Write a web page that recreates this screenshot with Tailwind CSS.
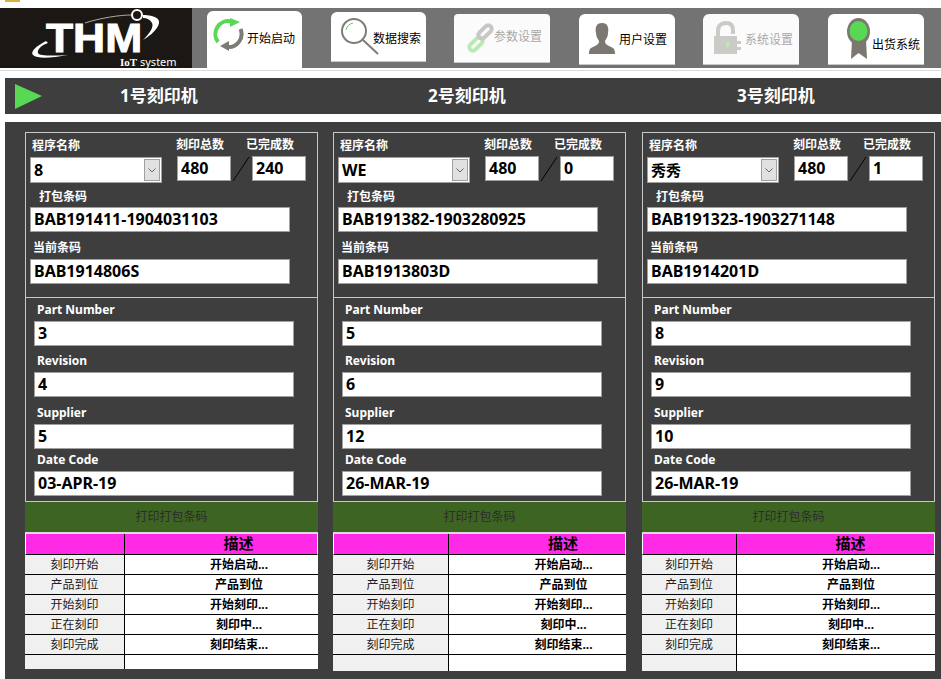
<!DOCTYPE html>
<html lang="zh">
<head>
<meta charset="UTF-8">
<title>THM IoT system</title>
<script src="https://cdn.jsdelivr.net/npm/@tailwindcss/browser@4"></script>
</head>
<body class="bg-white w-[941px] h-[679px] overflow-hidden font-['Noto_Sans','Noto_Sans_CJK_SC',sans-serif]">

<div class="h-2 pl-[5px]"><div class="w-[15px] h-[2px] bg-[#d8b040]"></div></div>

<!-- top nav -->
<div class="h-[60px] flex bg-[#737373]">
  <div class="w-[192px] h-[60px] bg-[#1a1714] relative overflow-hidden shrink-0">
    <svg class="absolute left-0 top-0" width="192" height="60" viewBox="0 0 192 60">
      <path d="M46 33C36 38 30 44 33 47C37 51 52 50 68 47C52 48 39 48 38 45C37 42 41 37 48 35Z" fill="#fff"/>
      <path d="M85 15C100 10 120 7 131 7" fill="none" stroke="#b5aa98" stroke-width="1"/>
      <path d="M143 7C155 7 162 11 158 18C155 24 148 29 143 32C150 25 154 19 152 15C150 11 146 10 143 10Z" fill="#fff"/>
      <circle cx="137" cy="7" r="5" fill="#1a1714" stroke="#fff" stroke-width="2"/>
    </svg>
    <span class="absolute left-[46px] top-[14px] font-['Liberation_Sans'] font-bold text-white text-[40px] leading-[32px] scale-x-[1.11] origin-left [-webkit-text-stroke:1px_white]">THM</span>
    <span class="absolute left-[120px] top-[47px] text-white text-[11px] leading-[13px] whitespace-nowrap"><span class="font-['Liberation_Serif'] font-bold">IoT</span> system</span>
  </div>
  <div class="pl-[15px] flex items-start">
    <div class="w-[95px] h-[57px] mt-[3px] bg-white rounded-t-md relative text-xs text-black">
      <svg class="absolute left-[6px] top-[7px]" width="32" height="36" viewBox="0 0 32 36" fill="none" stroke-width="4">
        <path d="M5 24A13 13 0 0 1 18 3.4" stroke="#59d854"/><path d="M17 0L27 4L17 9Z" fill="#59d854"/>
        <path d="M27.5 11A13 13 0 0 1 14 29" stroke="#7d7d78"/><path d="M16 23L7 28L16 33Z" fill="#7d7d78"/>
      </svg>
      <span class="absolute left-[40px] top-[20px] leading-[16px]">开始启动</span>
    </div>
    <div class="w-[95px] h-[50px] mt-1 ml-[29px] bg-white rounded-t-md border-b border-[#c8c8c8] relative text-xs text-black">
      <svg class="absolute left-[9px] top-[5px]" width="40" height="40" viewBox="0 0 40 40" fill="none">
        <circle cx="14" cy="14" r="12" stroke="#7d7d78" stroke-width="2"/><path d="M23 23L38 37" stroke="#7d7d78" stroke-width="2"/><path d="M6 13C7 9 9 7 13 6" stroke="#59d854"/>
      </svg>
      <span class="absolute left-[42px] top-[19px] leading-[16px]">数据搜索</span>
    </div>
    <div class="w-[96px] h-[49px] mt-[6px] ml-[28px] bg-[#fbfbfb] rounded-t-sm border-b border-[#c8c8c8] relative text-xs text-[#a8a8a8]">
      <svg class="absolute left-[11px] top-[7px]" width="32" height="36" viewBox="0 0 32 36" fill="none" stroke-width="4">
        <rect x="3" y="19.5" width="16" height="7" rx="3.5" transform="rotate(-45 11 23)" stroke="#b8eab6"/>
        <rect x="12" y="7.5" width="16" height="7" rx="3.5" transform="rotate(-45 20 11)" stroke="#c9c7c5"/>
      </svg>
      <span class="absolute left-[40px] top-[15px] leading-[16px]">参数设置</span>
    </div>
    <div class="w-[96px] h-[51px] mt-[6px] ml-[29px] bg-white rounded-t-md border-b border-[#c8c8c8] relative text-xs text-black">
      <svg class="absolute left-[9px] top-[9px]" width="28" height="32" viewBox="0 0 28 32" fill="#7a7870">
        <path d="M14 0C8 0 7 5 8 10C8 14 10 16 11 18C11 21 9 22 5 24C2 25 1 27 1 31H27C27 27 26 25 23 24C19 22 17 21 17 18C18 16 20 14 20 10C21 5 20 0 14 0Z"/>
      </svg>
      <span class="absolute left-[40px] top-[18px] leading-[16px]">用户设置</span>
    </div>
    <div class="w-[96px] h-[51px] mt-[6px] ml-[28px] bg-[#fbfbfb] rounded-t-md border-b border-[#c8c8c8] relative text-xs text-[#a8a8a8]">
      <svg class="absolute left-[10px] top-[6px]" width="28" height="40" viewBox="0 0 28 40">
        <path d="M5 20V11C5 5 9 3 13 3C18 3 20 6 20 10V14" fill="none" stroke="#cbcac7" stroke-width="4"/>
        <path d="M2 16H24V21H28V24H24V27H28V30H24V34H2C1 34 1 34 1 33V17C1 16 1 16 2 16Z" fill="#cbcac7"/>
        <path d="M12 22H17L15 30Z" fill="#b8eab6"/>
      </svg>
      <span class="absolute left-[42px] top-[18px] leading-[16px]">系统设置</span>
    </div>
    <div class="w-[96px] h-[51px] mt-[6px] ml-[29px] bg-white rounded-t-md border-b border-[#c8c8c8] relative text-xs text-black">
      <svg class="absolute left-[19px] top-[4px]" width="24" height="42" viewBox="0 0 24 42">
        <path d="M5 22L4 41L11.5 35L20 41L19 22Z" fill="#7a7870"/>
        <ellipse cx="11.5" cy="13.5" rx="11.5" ry="13.5" fill="#7a7870"/>
        <ellipse cx="11.5" cy="13" rx="9" ry="10" fill="#59d854"/>
      </svg>
      <span class="absolute left-[44px] top-[23px] leading-[16px]">出货系统</span>
    </div>
  </div>
</div>

<div class="h-[2px]"></div>
<div class="h-px bg-[#dcdcdc]"></div>

<div class="ml-[5px] mt-[7px] h-9 bg-[#3e3e3e] flex items-center text-white font-bold text-[17px] relative">
  <svg class="absolute left-[10px] top-[6px]" width="28" height="25" viewBox="0 0 28 25"><path d="M0 0L27 12L0 25Z" fill="#59d854"/></svg>
  <span class="ml-[115px] w-[308px]">1号刻印机</span>
  <span class="w-[309px]">2号刻印机</span>
  <span>3号刻印机</span>
</div>

<!-- machines -->
<div class="ml-[5px] mt-2 h-[557px] bg-[#3e3e3e] pt-[10px] pl-5 flex gap-[15px]">

  <!-- col 1 -->
  <div class="w-[293px]">
    <div class="h-[165px] border border-[#c8c8c8] border-b-0 relative text-xs font-bold text-white">
      <div class="flex">
        <div class="pl-[6px] pt-[5px] w-[150px]">
          <div class="leading-[16px]">程序名称</div>
          <div class="mt-[3px] ml-[-2px] w-[132px] h-[26px] bg-white border border-[#a0a0a0] flex items-center justify-between pl-[3px] pr-px text-base text-black">8<span class="w-4 h-[22px] bg-[#e1e1e1] border border-[#a0a0a0] flex items-center justify-center"><svg width="8" height="5" viewBox="0 0 8 5" fill="none"><path d="M0.5 0.5L4 4L7.5 0.5" stroke="#666"/></svg></span></div>
        </div>
        <div class="pt-1 w-[76px]">
          <div class="leading-[16px]">刻印总数</div>
          <div class="mt-[3px] ml-px w-[54px] h-[25px] bg-white border border-[#a0a0a0] flex items-center pl-[3px] pb-[2px] text-base text-black">480</div>
        </div>
        <div class="pt-1">
          <div class="leading-[16px] -ml-[6px]">已完成数</div>
          <div class="mt-[3px] w-[54px] h-[25px] bg-white border border-[#a0a0a0] flex items-center pl-[3px] pb-[2px] text-base text-black">240</div>
        </div>
      </div>
      <div class="pl-[13px] mt-[6px] leading-[16px]">打包条码</div>
      <div class="ml-1 mt-[2px] w-[260px] h-[25px] bg-white border border-[#a0a0a0] flex items-center pl-[3px] pb-[2px] text-base text-black">BAB191411-1904031103</div>
      <div class="pl-[7px] mt-2 leading-[16px]">当前条码</div>
      <div class="ml-1 mt-[3px] w-[260px] h-[25px] bg-white border border-[#a0a0a0] flex items-center pl-[3px] pb-[2px] text-base text-black">BAB1914806S</div>
      <svg class="absolute left-[206px] top-[23px]" width="18" height="26" viewBox="0 0 18 26"><path d="M1 25L17 1" stroke="#000"/></svg>
    </div>
    <div class="h-[205px] border border-[#c8c8c8] text-xs font-bold text-white pl-2">
      <div class="ml-[3px] mt-1 leading-[16px]">Part Number</div>
      <div class="mt-[3px] w-[260px] h-[25px] bg-white border border-[#a0a0a0] flex items-center pl-[3px] pb-[2px] text-base text-black">3</div>
      <div class="ml-[3px] mt-[7px] leading-[16px]">Revision</div>
      <div class="mt-[3px] w-[260px] h-[25px] bg-white border border-[#a0a0a0] flex items-center pl-[3px] pb-[2px] text-base text-black">4</div>
      <div class="ml-[3px] mt-2 leading-[16px]">Supplier</div>
      <div class="mt-[3px] w-[260px] h-[25px] bg-white border border-[#a0a0a0] flex items-center pl-[3px] pb-[2px] text-base text-black">5</div>
      <div class="ml-[3px] mt-[3px] leading-[16px]">Date Code</div>
      <div class="mt-[3px] w-[260px] h-[25px] bg-white border border-[#a0a0a0] flex items-center pl-[3px] pb-[2px] text-base text-black">03-APR-19</div>
    </div>
    <div class="h-[30px] bg-[#3e6423] flex items-center justify-center text-xs text-[#2c2c2c]">打印打包条码</div>
    <div class="h-[137px] bg-white border-t-2 border-[#dcdcdc] text-xs">
      <div class="grid grid-cols-[99px_1fr] h-[21px] font-bold text-[15px] text-black bg-[#ff2ae6] border-x border-white border-b border-b-black"><div class="border-r border-black"></div><div class="text-center leading-[18px] pl-[35px]">描述</div></div>
      <div class="grid grid-cols-[100px_1fr] h-5 border-b border-black leading-[19px] text-center"><div class="bg-[#f0f0f0] border-r border-black text-[#222]">刻印开始</div><div class="font-bold pl-[35px]">开始启动...</div></div>
      <div class="grid grid-cols-[100px_1fr] h-5 border-b border-black leading-[19px] text-center"><div class="bg-[#f0f0f0] border-r border-black text-[#222]">产品到位</div><div class="font-bold pl-[35px]">产品到位</div></div>
      <div class="grid grid-cols-[100px_1fr] h-5 border-b border-black leading-[19px] text-center"><div class="bg-[#f0f0f0] border-r border-black text-[#222]">开始刻印</div><div class="font-bold pl-[35px]">开始刻印...</div></div>
      <div class="grid grid-cols-[100px_1fr] h-5 border-b border-black leading-[19px] text-center"><div class="bg-[#f0f0f0] border-r border-black text-[#222]">正在刻印</div><div class="font-bold pl-[35px]">刻印中...</div></div>
      <div class="grid grid-cols-[100px_1fr] h-5 border-b border-black leading-[19px] text-center"><div class="bg-[#f0f0f0] border-r border-black text-[#222]">刻印完成</div><div class="font-bold pl-[35px]">刻印结束...</div></div>
      <div class="grid grid-cols-[100px_1fr] h-[14px]"><div class="bg-[#f0f0f0] border-r border-black"></div><div></div></div>
    </div>
  </div>

  <!-- col 2 -->
  <div class="w-[293px]">
    <div class="h-[165px] border border-[#c8c8c8] border-b-0 relative text-xs font-bold text-white">
      <div class="flex">
        <div class="pl-[6px] pt-[5px] w-[150px]">
          <div class="leading-[16px]">程序名称</div>
          <div class="mt-[3px] ml-[-2px] w-[132px] h-[26px] bg-white border border-[#a0a0a0] flex items-center justify-between pl-[3px] pr-px text-base text-black">WE<span class="w-4 h-[22px] bg-[#e1e1e1] border border-[#a0a0a0] flex items-center justify-center"><svg width="8" height="5" viewBox="0 0 8 5" fill="none"><path d="M0.5 0.5L4 4L7.5 0.5" stroke="#666"/></svg></span></div>
        </div>
        <div class="pt-1 w-[76px]">
          <div class="leading-[16px]">刻印总数</div>
          <div class="mt-[3px] ml-px w-[54px] h-[25px] bg-white border border-[#a0a0a0] flex items-center pl-[3px] pb-[2px] text-base text-black">480</div>
        </div>
        <div class="pt-1">
          <div class="leading-[16px] -ml-[6px]">已完成数</div>
          <div class="mt-[3px] w-[54px] h-[25px] bg-white border border-[#a0a0a0] flex items-center pl-[3px] pb-[2px] text-base text-black">0</div>
        </div>
      </div>
      <div class="pl-[13px] mt-[6px] leading-[16px]">打包条码</div>
      <div class="ml-1 mt-[2px] w-[260px] h-[25px] bg-white border border-[#a0a0a0] flex items-center pl-[3px] pb-[2px] text-base text-black">BAB191382-1903280925</div>
      <div class="pl-[7px] mt-2 leading-[16px]">当前条码</div>
      <div class="ml-1 mt-[3px] w-[260px] h-[25px] bg-white border border-[#a0a0a0] flex items-center pl-[3px] pb-[2px] text-base text-black">BAB1913803D</div>
      <svg class="absolute left-[206px] top-[23px]" width="18" height="26" viewBox="0 0 18 26"><path d="M1 25L17 1" stroke="#000"/></svg>
    </div>
    <div class="h-[205px] border border-[#c8c8c8] text-xs font-bold text-white pl-2">
      <div class="ml-[3px] mt-1 leading-[16px]">Part Number</div>
      <div class="mt-[3px] w-[260px] h-[25px] bg-white border border-[#a0a0a0] flex items-center pl-[3px] pb-[2px] text-base text-black">5</div>
      <div class="ml-[3px] mt-[7px] leading-[16px]">Revision</div>
      <div class="mt-[3px] w-[260px] h-[25px] bg-white border border-[#a0a0a0] flex items-center pl-[3px] pb-[2px] text-base text-black">6</div>
      <div class="ml-[3px] mt-2 leading-[16px]">Supplier</div>
      <div class="mt-[3px] w-[260px] h-[25px] bg-white border border-[#a0a0a0] flex items-center pl-[3px] pb-[2px] text-base text-black">12</div>
      <div class="ml-[3px] mt-[3px] leading-[16px]">Date Code</div>
      <div class="mt-[3px] w-[260px] h-[25px] bg-white border border-[#a0a0a0] flex items-center pl-[3px] pb-[2px] text-base text-black">26-MAR-19</div>
    </div>
    <div class="h-[30px] bg-[#3e6423] flex items-center justify-center text-xs text-[#2c2c2c]">打印打包条码</div>
    <div class="h-[139px] bg-white border-t-2 border-[#dcdcdc] text-xs">
      <div class="grid grid-cols-[115px_1fr] h-[21px] font-bold text-[15px] text-black bg-[#ff2ae6] border-x border-white border-b border-b-black"><div class="border-r border-black"></div><div class="text-center leading-[18px] pl-[52px]">描述</div></div>
      <div class="grid grid-cols-[116px_1fr] h-5 border-b border-black leading-[19px] text-center"><div class="bg-[#f0f0f0] border-r border-black text-[#222]">刻印开始</div><div class="font-bold pl-[52px]">开始启动...</div></div>
      <div class="grid grid-cols-[116px_1fr] h-5 border-b border-black leading-[19px] text-center"><div class="bg-[#f0f0f0] border-r border-black text-[#222]">产品到位</div><div class="font-bold pl-[52px]">产品到位</div></div>
      <div class="grid grid-cols-[116px_1fr] h-5 border-b border-black leading-[19px] text-center"><div class="bg-[#f0f0f0] border-r border-black text-[#222]">开始刻印</div><div class="font-bold pl-[52px]">开始刻印...</div></div>
      <div class="grid grid-cols-[116px_1fr] h-5 border-b border-black leading-[19px] text-center"><div class="bg-[#f0f0f0] border-r border-black text-[#222]">正在刻印</div><div class="font-bold pl-[52px]">刻印中...</div></div>
      <div class="grid grid-cols-[116px_1fr] h-5 border-b border-black leading-[19px] text-center"><div class="bg-[#f0f0f0] border-r border-black text-[#222]">刻印完成</div><div class="font-bold pl-[52px]">刻印结束...</div></div>
      <div class="grid grid-cols-[116px_1fr] h-4"><div class="bg-[#f0f0f0] border-r border-black"></div><div></div></div>
    </div>
  </div>

  <!-- col 3 -->
  <div class="w-[293px] ml-px">
    <div class="h-[165px] border border-[#c8c8c8] border-b-0 relative text-xs font-bold text-white">
      <div class="flex">
        <div class="pl-[6px] pt-[5px] w-[150px]">
          <div class="leading-[16px]">程序名称</div>
          <div class="mt-[3px] ml-[-2px] w-[132px] h-[26px] bg-white border border-[#a0a0a0] flex items-center justify-between pl-[3px] pr-px text-[15px] text-black">秀秀<span class="w-4 h-[22px] bg-[#e1e1e1] border border-[#a0a0a0] flex items-center justify-center"><svg width="8" height="5" viewBox="0 0 8 5" fill="none"><path d="M0.5 0.5L4 4L7.5 0.5" stroke="#666"/></svg></span></div>
        </div>
        <div class="pt-1 w-[76px]">
          <div class="leading-[16px]">刻印总数</div>
          <div class="mt-[3px] ml-px w-[54px] h-[25px] bg-white border border-[#a0a0a0] flex items-center pl-[3px] pb-[2px] text-base text-black">480</div>
        </div>
        <div class="pt-1">
          <div class="leading-[16px] -ml-[6px]">已完成数</div>
          <div class="mt-[3px] w-[54px] h-[25px] bg-white border border-[#a0a0a0] flex items-center pl-[3px] pb-[2px] text-base text-black">1</div>
        </div>
      </div>
      <div class="pl-[13px] mt-[6px] leading-[16px]">打包条码</div>
      <div class="ml-1 mt-[2px] w-[260px] h-[25px] bg-white border border-[#a0a0a0] flex items-center pl-[3px] pb-[2px] text-base text-black">BAB191323-1903271148</div>
      <div class="pl-[7px] mt-2 leading-[16px]">当前条码</div>
      <div class="ml-1 mt-[3px] w-[260px] h-[25px] bg-white border border-[#a0a0a0] flex items-center pl-[3px] pb-[2px] text-base text-black">BAB1914201D</div>
      <svg class="absolute left-[206px] top-[23px]" width="18" height="26" viewBox="0 0 18 26"><path d="M1 25L17 1" stroke="#000"/></svg>
    </div>
    <div class="h-[205px] border border-[#c8c8c8] text-xs font-bold text-white pl-2">
      <div class="ml-[3px] mt-1 leading-[16px]">Part Number</div>
      <div class="mt-[3px] w-[260px] h-[25px] bg-white border border-[#a0a0a0] flex items-center pl-[3px] pb-[2px] text-base text-black">8</div>
      <div class="ml-[3px] mt-[7px] leading-[16px]">Revision</div>
      <div class="mt-[3px] w-[260px] h-[25px] bg-white border border-[#a0a0a0] flex items-center pl-[3px] pb-[2px] text-base text-black">9</div>
      <div class="ml-[3px] mt-2 leading-[16px]">Supplier</div>
      <div class="mt-[3px] w-[260px] h-[25px] bg-white border border-[#a0a0a0] flex items-center pl-[3px] pb-[2px] text-base text-black">10</div>
      <div class="ml-[3px] mt-[3px] leading-[16px]">Date Code</div>
      <div class="mt-[3px] w-[260px] h-[25px] bg-white border border-[#a0a0a0] flex items-center pl-[3px] pb-[2px] text-base text-black">26-MAR-19</div>
    </div>
    <div class="h-[30px] bg-[#3e6423] flex items-center justify-center text-xs text-[#2c2c2c]">打印打包条码</div>
    <div class="h-[139px] bg-white border-t-2 border-[#dcdcdc] text-xs">
      <div class="grid grid-cols-[94px_1fr] h-[21px] font-bold text-[15px] text-black bg-[#ff2ae6] border-x border-white border-b border-b-black"><div class="border-r border-black"></div><div class="text-center leading-[18px] pl-[30px]">描述</div></div>
      <div class="grid grid-cols-[95px_1fr] h-5 border-b border-black leading-[19px] text-center"><div class="bg-[#f0f0f0] border-r border-black text-[#222]">刻印开始</div><div class="font-bold pl-[30px]">开始启动...</div></div>
      <div class="grid grid-cols-[95px_1fr] h-5 border-b border-black leading-[19px] text-center"><div class="bg-[#f0f0f0] border-r border-black text-[#222]">产品到位</div><div class="font-bold pl-[30px]">产品到位</div></div>
      <div class="grid grid-cols-[95px_1fr] h-5 border-b border-black leading-[19px] text-center"><div class="bg-[#f0f0f0] border-r border-black text-[#222]">开始刻印</div><div class="font-bold pl-[30px]">开始刻印...</div></div>
      <div class="grid grid-cols-[95px_1fr] h-5 border-b border-black leading-[19px] text-center"><div class="bg-[#f0f0f0] border-r border-black text-[#222]">正在刻印</div><div class="font-bold pl-[30px]">刻印中...</div></div>
      <div class="grid grid-cols-[95px_1fr] h-5 border-b border-black leading-[19px] text-center"><div class="bg-[#f0f0f0] border-r border-black text-[#222]">刻印完成</div><div class="font-bold pl-[30px]">刻印结束...</div></div>
      <div class="grid grid-cols-[95px_1fr] h-4"><div class="bg-[#f0f0f0] border-r border-black"></div><div></div></div>
    </div>
  </div>

</div>
</body>
</html>
